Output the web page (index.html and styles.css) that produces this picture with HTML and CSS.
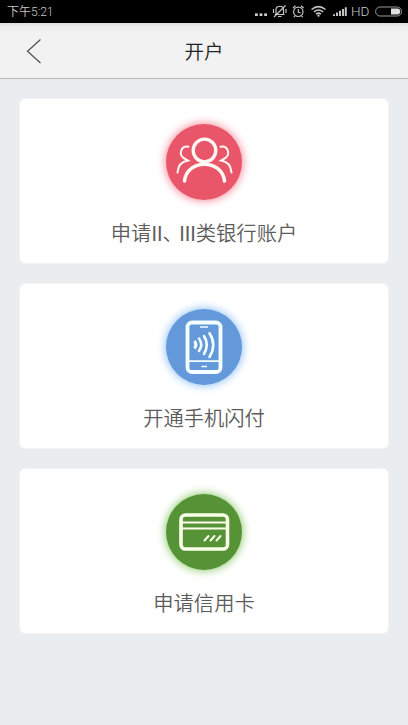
FILE: index.html
```html
<!DOCTYPE html>
<html lang="zh-CN">
<head>
<meta charset="utf-8">
<title>开户</title>
<link rel="stylesheet" href="styles.css">
</head>
<body>
<div class="status">
  <span class="time">下午5:21</span>
  <svg class="status-icons" width="154" height="23" viewBox="254 0 154 23" fill="none" stroke="#c4c4c4" stroke-width="1.2">
    <g fill="#d0d0d0" stroke="none"><rect x="255" y="13.4" width="2.8" height="2.6"/><rect x="259.6" y="13.4" width="2.8" height="2.6"/><rect x="264.2" y="13.4" width="2.8" height="2.6"/></g>
    <path d="M276 14.5V9.5C276 5.2 283.500 5.200 283.500 9.500V14.500M274.800 14.500H284.500M278 16.500H281.500M274 17L285.500 5.500M273.500 9V13M286 9V13"/>
    <circle cx="298.300" cy="11.800" r="4.700"/><path d="M298.300 9V12L300.500 13M293 8L295.500 5.700M301 5.700L303.600 8M295 16L293.800 17.200M301.600 16L302.800 17.200"/>
    <path d="M311.500 9.500Q318.500 3.700 325.500 9.500M313.800 12Q318.500 8 323.200 12M316 14.200Q318.500 12 321 14.200" stroke-width="1.500"/><circle cx="318.500" cy="15.700" r="1.100" fill="#d0d0d0" stroke="none"/>
    <path d="M334 16V14.200M337 16V12.500M340 16V10.800M343 16V9M345.800 16V7.200" stroke-width="2"/>
    <rect x="375.600" y="7" width="26" height="9" rx="4.500" stroke="#9a9a9a" stroke-width="1"/><path d="M391 8.500H397.500Q400.200 8.500 400.200 11.500T397.500 14.600H391Z" fill="#e0e0e0" stroke="none"/>
  </svg>
  <span class="hd">HD</span>
</div>
<header class="bar">
  <svg class="back" width="16" height="26" viewBox="0 0 16 26" fill="none" stroke="#555" stroke-width="1.300"><path d="M14.500 1.500L1.500 13.300L14.500 25"/></svg>
  <h1 class="title">开户</h1>
</header>
<main class="cards">
  <section class="card">
    <div class="disc red">
      <svg width="76" height="76" viewBox="0 0 76 76" fill="none" stroke="#fff8f5" stroke-linecap="round">
        <circle cx="38.500" cy="26.500" r="11.300" stroke-width="3.300"/>
        <path d="M18.500 57C21 34.500 56 34.500 58.500 57" stroke-width="3.500"/>
        <path d="M22.500 22.800C15.500 21.300 12.500 29.500 17 33.500C18.500 34.800 20.500 35.500 22 36.500C15.500 37.500 12 42 11.500 48.500M54.500 22.800C61.500 21.300 64.500 29.500 60 33.500C58.500 34.800 56.500 35.500 55 36.500C61.500 37.500 65 42 65.500 48.500" stroke-width="2"/>
      </svg>
    </div>
    <p class="label">申请<span class="numeral">II</span><span class="comma">、</span><span class="numeral">III</span>类银行账户</p>
  </section>
  <section class="card">
    <div class="disc blue">
      <svg width="76" height="76" viewBox="0 0 76 76" fill="none" stroke="#f4ffff">
        <rect x="21.500" y="13.500" width="33" height="49.500" rx="4.500" stroke-width="3.800"/>
        <path d="M34 18H42M22 52.200H54M35.500 57.500H41" stroke-width="1.700"/>
        <path d="M28.500 32Q31.300 35.700 28.500 39.500" stroke-width="3"/>
        <path d="M33 29.500Q37.500 35.700 33 42M38 27Q43.500 35.700 38 45M43.500 24.300Q51 35.700 43.500 48" stroke-width="2.600" stroke-linecap="round"/>
      </svg>
    </div>
    <p class="label">开通手机闪付</p>
  </section>
  <section class="card">
    <div class="disc green">
      <svg width="76" height="76" viewBox="0 0 76 76" fill="none" stroke="#fbffe8">
        <rect x="15" y="21" width="46.500" height="34" rx="4.500" stroke-width="3.600"/>
        <path d="M15 28.500H61M15 34.500H61" stroke-width="1.800"/>
        <path d="M38.500 46.500L42.500 42M44.500 46.500L48.500 42M50.500 46.500L54.500 42" stroke-width="2" stroke-linecap="round"/>
      </svg>
    </div>
    <p class="label">申请信用卡</p>
  </section>
</main>
</body>
</html>
```
FILE: styles.css
```css
* { box-sizing: border-box; }
body {
  margin: 0;
  min-height: 725px;
  background: #e9edf0;
  font-family: Roboto, "Noto Sans CJK SC", sans-serif;
}
.status {
  position: relative;
  height: 23px;
  padding: 0 0 0 7px;
  display: flex;
  justify-content: space-between;
  background: #000;
  color: #c8c8c8;
}
.time {
  font-size: 12px;
  line-height: 25px;
  font-weight: 350;
}
.hd {
  position: absolute;
  left: 351px;
  top: 0;
  font-size: 13.500px;
  line-height: 23px;
  font-weight: 350;
}
.bar {
  height: 56px;
  display: grid;
  grid-template-columns: 66px 1fr 66px;
  align-items: center;
  background: linear-gradient(#dedede 0, #ebebeb 4px, #f2f2f2 10px);
  border-bottom: 1px solid #bababa;
}
.back { margin-left: 26px; }
.title {
  margin: 0;
  padding-top: 4px;
  text-align: center;
  font-size: 19.500px;
  line-height: 28px;
  font-weight: 350;
  color: #222;
}
.cards {
  padding: 19px 19px 0;
  display: grid;
  gap: 19px;
}
.card {
  height: 166px;
  padding-top: 25px;
  display: flex;
  flex-direction: column;
  align-items: center;
  background: #fff;
  border: 1px solid #f1f2f2;
  border-radius: 6px;
}
.disc {
  width: 76px;
  height: 76px;
  border-radius: 50%;
}
.disc svg { display: block; }
.red { background: #e9566a; box-shadow: 0 0 8px 1px #f58c9c; }
.blue { background: #6399da; box-shadow: 0 0 8px 1px #92c2f5; }
.green { background: #569337; box-shadow: 0 0 8px 1px #8fcb72; }
.label {
  margin: 20px 0 0;
  font-size: 20.300px;
  line-height: 28px;
  font-weight: 350;
  color: #5c5c5c;
  white-space: nowrap;
}
.comma { letter-spacing: -3.500px; }
.numeral { font-weight: 400; }
```
